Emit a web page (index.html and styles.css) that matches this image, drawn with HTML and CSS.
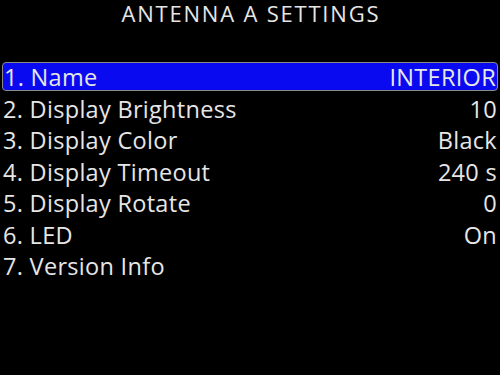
FILE: index.html
```html
<!DOCTYPE html>
<html>
<head>
<meta charset="utf-8">
<link rel="stylesheet" href="styles.css">
</head>
<body>
<div class="screen">
  <h1 class="title">ANTENNA A SETTINGS</h1>
  <ul class="menu">
    <li class="item selected"><span>1. Name</span><span>INTERIOR</span></li>
    <li class="item"><span>2. Display Brightness</span><span>10</span></li>
    <li class="item"><span>3. Display Color</span><span>Black</span></li>
    <li class="item"><span>4. Display Timeout</span><span>240 s</span></li>
    <li class="item"><span>5. Display Rotate</span><span>0</span></li>
    <li class="item"><span>6. LED</span><span>On</span></li>
    <li class="item"><span>7. Version Info</span><span></span></li>
  </ul>
</div>
</body>
</html>
```
FILE: styles.css
```css
html, body {
  margin: 0;
  padding: 0;
  background: #000;
}
.screen {
  width: 500px;
  height: 375px;
  background: #000;
  color: #e6e6e6;
  font-family: "Open Sans", sans-serif;
  overflow: hidden;
}
.title {
  margin: 0;
  height: 62px;
  font-size: 22px;
  font-weight: 400;
  letter-spacing: 1.8px;
  text-indent: 1.8px;
  text-align: center;
  line-height: 27px;
}
.menu {
  list-style: none;
  margin: 0;
  padding: 0 2px;
}
.item {
  display: flex;
  justify-content: space-between;
  align-items: center;
  height: 31.5px;
  font-size: 23.5px;
  letter-spacing: 0.3px;
  padding: 0 1px;
  line-height: 28px;
}
.selected {
  margin-bottom: 2px;
  background: #0a0af0;
  border: 1px solid #8a8a8a;
  border-radius: 4px;
  box-sizing: border-box;
  height: 29px;
}
```
